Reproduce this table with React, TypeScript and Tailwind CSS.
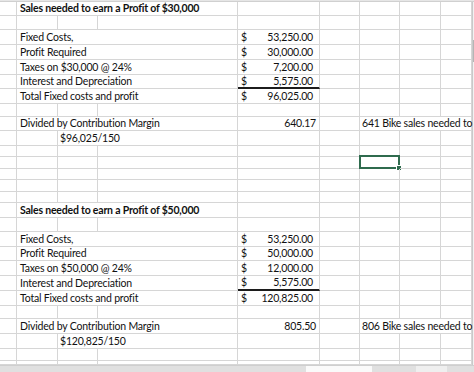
import React from 'react'

type Cell = {
  span?: 1 | 2 | 3
  text?: string
  kind?: 'label' | 'bold' | 'indent' | 'acct' | 'num' | 'note'
  underline?: boolean
  selected?: boolean
}

type Row = { h: string; cells: Cell[] }

const SPAN: Record<number, string> = { 1: 'col-span-1', 2: 'col-span-2', 3: 'col-span-3' }

const empty = (): Cell[] => Array.from({ length: 9 }, () => ({}))

const title = (t: string): Cell[] => [{}, { span: 3, text: t, kind: 'bold' }, {}, {}, {}, {}, {}]

const line = (label: string, amount: string, underline = false): Cell[] => [
  {},
  { span: 3, text: label, kind: 'label' },
  { text: amount, kind: 'acct', underline },
  {},
  {},
  {},
  {},
]

const divided = (val: string, note: string): Cell[] => [
  {},
  { span: 3, text: 'Divided by Contribution Margin', kind: 'label' },
  { text: val, kind: 'num' },
  {},
  { span: 3, text: note, kind: 'note' },
]

const formula = (t: string): Cell[] => [{}, {}, { span: 2, text: t, kind: 'indent' }, {}, {}, {}, {}, {}]

const ROWS: Row[] = [
  { h: 'h-[14px]', cells: title('Sales needed to earn a Profit of $30,000') },
  { h: 'h-[14px]', cells: empty() },
  { h: 'h-[15px]', cells: line('Fixed Costs,', '53,250.00') },
  { h: 'h-[15px]', cells: line('Profit Required', '30,000.00') },
  { h: 'h-[15px]', cells: line('Taxes on $30,000 @ 24%', '7,200.00') },
  { h: 'h-[14px]', cells: line('Interest and Depreciation', '5,575.00', true) },
  { h: 'h-[15px]', cells: line('Total Fixed costs and profit', '96,025.00') },
  { h: 'h-[13px]', cells: empty() },
  { h: 'h-[14px]', cells: divided('640.17', '641 Bike sales needed to') },
  { h: 'h-[15px]', cells: formula('$96,025/150') },
  { h: 'h-[11px]', cells: empty() },
  {
    h: 'h-[12px]',
    cells: [{}, {}, {}, {}, {}, {}, { selected: true }, {}, {}],
  },
  { h: 'h-[11px]', cells: empty() },
  { h: 'h-[12px]', cells: empty() },
  { h: 'h-[11px]', cells: empty() },
  { h: 'h-[15px]', cells: title('Sales needed to earn a Profit of $50,000') },
  { h: 'h-[14px]', cells: empty() },
  { h: 'h-[15px]', cells: line('Fixed Costs,', '53,250.00') },
  { h: 'h-[14px]', cells: line('Profit Required', '50,000.00') },
  { h: 'h-[15px]', cells: line('Taxes on $50,000 @ 24%', '12,000.00') },
  { h: 'h-[15px]', cells: line('Interest and Depreciation', '5,575.00', true) },
  { h: 'h-[15px]', cells: line('Total Fixed costs and profit', '120,825.00') },
  { h: 'h-[13px]', cells: empty() },
  { h: 'h-[15px]', cells: divided('805.50', '806 Bike sales needed to') },
  { h: 'h-[15px]', cells: formula('$120,825/150') },
  { h: 'h-[12px]', cells: empty() },
  { h: 'h-[4px]', cells: empty() },
]

function SheetCell({ cell }: { cell: Cell }) {
  const base = `${SPAN[cell.span ?? 1]} relative flex items-center min-w-0 whitespace-nowrap border-r border-[#d6d6d6] ${
    cell.underline ? 'border-b-2 border-b-[#1c1c1c]' : 'border-b border-b-[#d6d6d6]'
  }`

  if (cell.kind === 'acct') {
    return (
      <div className={`${base} justify-between pl-[3px] pr-[6px]`}>
        <span>$</span>
        <span>{cell.text}</span>
      </div>
    )
  }

  return (
    <div
      className={`${base} ${
        cell.kind === 'num' ? 'justify-end pr-[3px]' : cell.kind === 'indent' ? 'pl-[2px]' : cell.kind === 'note' ? 'pl-[2px]' : 'pl-[3px]'
      } ${cell.kind === 'bold' ? 'font-bold' : ''}`}
    >
      {cell.text}
      {cell.selected && (
        <>
          <div className="absolute -left-px -top-[2px] -right-px -bottom-px border-2 border-[#2f6b4e]" />
          <div className="absolute -right-[3px] -bottom-[3px] w-[4px] h-[4px] bg-[#2f6b4e] border border-white box-content" />
        </>
      )}
    </div>
  )
}

export default function App() {
  return (
    <div className="w-[474px] h-[372px] overflow-hidden bg-white text-[10.5px] tracking-[-0.2px] leading-none text-[#111] font-['Lato','Liberation_Sans',sans-serif]">
      <div className="h-[2px] bg-[#e6e6e6] border-b border-[#d0d0d0]" />
      <div className="flex">
        <div className="w-[472px]">
          {ROWS.map((row, i) => (
            <div
              key={i}
              className={`grid grid-cols-[17px_41px_40px_140px_82px_40px_40px_41px_31px] ${row.h}`}
            >
              {row.cells.map((c, j) => (
                <SheetCell key={j} cell={c} />
              ))}
            </div>
          ))}
        </div>
        {/* scrollbar */}
        <div className="w-[2px] bg-[#f2f2f2] border-l border-[#c9c9c9] flex flex-col">
          <div className="h-[38px]" />
          <div className="h-[22px] bg-[#b5b5b5]" />
        </div>
      </div>
      {/* sheet tabs */}
      <div className="h-[7px] flex bg-[#e0e0e0] border-t border-[#cfcfcf]">
        <div className="w-[306px]" />
        <div className="w-[66px] bg-[#fafafa]" />
        <div className="w-[44px]" />
        <div className="w-[31px] bg-[#efefef]" />
      </div>
    </div>
  )
}
